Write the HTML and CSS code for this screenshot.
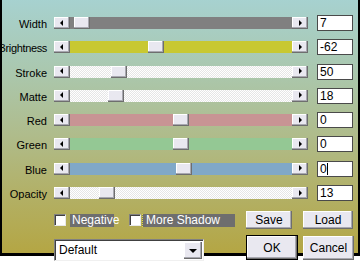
FILE: index.html
```html
<!DOCTYPE html>
<html>
<head>
<meta charset="utf-8">
<link rel="stylesheet" href="styles.css">
</head>
<body>
<div class="win">
  <div class="title">Parameters</div>
  <div class="rows">
    <div class="row">
      <span class="lbl">Width</span>
      <div class="slider"><span class="btn arr-l"></span><div class="track t-gray"><span class="thumb" style="left:4px"></span></div><span class="btn arr-r"></span></div>
      <span class="inp">7</span>
    </div>
    <div class="row">
      <span class="lbl lbl-tight">Brightness</span>
      <div class="slider"><span class="btn arr-l"></span><div class="track t-yellow"><span class="thumb" style="left:78px"></span></div><span class="btn arr-r"></span></div>
      <span class="inp">-62</span>
    </div>
    <div class="row">
      <span class="lbl">Stroke</span>
      <div class="slider"><span class="btn arr-l"></span><div class="track t-dither"><span class="thumb" style="left:41px"></span></div><span class="btn arr-r"></span></div>
      <span class="inp">50</span>
    </div>
    <div class="row">
      <span class="lbl">Matte</span>
      <div class="slider"><span class="btn arr-l"></span><div class="track t-dither"><span class="thumb" style="left:38px"></span></div><span class="btn arr-r"></span></div>
      <span class="inp">18</span>
    </div>
    <div class="row">
      <span class="lbl">Red</span>
      <div class="slider"><span class="btn arr-l"></span><div class="track t-red"><span class="thumb" style="left:103px"></span></div><span class="btn arr-r"></span></div>
      <span class="inp">0</span>
    </div>
    <div class="row">
      <span class="lbl">Green</span>
      <div class="slider"><span class="btn arr-l"></span><div class="track t-green"><span class="thumb" style="left:103px"></span></div><span class="btn arr-r"></span></div>
      <span class="inp">0</span>
    </div>
    <div class="row">
      <span class="lbl">Blue</span>
      <div class="slider"><span class="btn arr-l"></span><div class="track t-blue"><span class="thumb" style="left:106px"></span></div><span class="btn arr-r"></span></div>
      <span class="inp">0<span class="caret"></span></span>
    </div>
    <div class="row">
      <span class="lbl">Opacity</span>
      <div class="slider"><span class="btn arr-l"></span><div class="track t-dither"><span class="thumb" style="left:29px"></span></div><span class="btn arr-r"></span></div>
      <span class="inp">13</span>
    </div>
  </div>
  <div class="bottom">
    <div class="brow brow1">
      <div class="checks">
        <span class="cb"></span><span class="cblbl neg">Negative</span>
        <span class="cb cb2"></span><span class="cblbl more">More Shadow</span>
      </div>
      <span class="pbtn save">Save</span>
      <span class="pbtn load">Load</span>
    </div>
    <div class="brow brow2">
      <div class="combo"><span class="combotext">Default</span><span class="combobtn"></span></div>
      <span class="pbtn ok">OK</span>
      <span class="pbtn cancel">Cancel</span>
    </div>
  </div>
</div>
</body>
</html>
```

FILE: styles.css
```css
html, body {
  margin: 0;
  padding: 0;
}
body {
  width: 360px;
  height: 268px;
  overflow: hidden;
}
.win {
  box-sizing: border-box;
  width: 360px;
  height: 268px;
  border-left: 2px solid #000;
  border-right: 2px solid #000;
  border-bottom: 3px solid #000;
  background: linear-gradient(to bottom, #a6d3d5 0%, #aac8b0 30%, #afbc8c 55%, #b2b066 78%, #b4a644 100%);
  font-family: "Liberation Sans", Arial, sans-serif;
  font-size: 11px;
  color: #000;
}
.title {
  height: 15px;
  line-height: 15px;
  margin-top: -12px;
  padding-left: 14px;
  text-align: center;
  font-size: 11px;
  color: #111;
}
.rows {
  margin-top: 12px;
  display: flex;
  flex-direction: column;
  gap: 8.3px;
}
.row {
  display: grid;
  grid-template-columns: 45px 254px 36px;
  column-gap: 7px;
  height: 16px;
}
.row .inp { margin-left: 2px; }
.lbl {
  display: flex;
  justify-content: flex-end;
  white-space: nowrap;
  line-height: 16px;
  padding-top: 1px;
}
.lbl-tight {
  letter-spacing: -0.35px;
  margin-left: -10px;
}
.slider {
  display: flex;
  height: 12px;
  margin-top: 2px;
}
.btn, .thumb {
  box-sizing: border-box;
  width: 16px;
  height: 12px;
  background: #e9e8f0;
  box-shadow: inset -1px -1px #6e6e6e, inset -2px -2px #a8a8b0, inset 1px 1px #fff;
  flex: none;
}
.btn {
  position: relative;
  display: flex;
  align-items: center;
  justify-content: center;
}
.btn::before {
  content: "";
  width: 0;
  height: 0;
  border-top: 3px solid transparent;
  border-bottom: 3px solid transparent;
  margin-top: -1px;
}
.arr-l::before {
  border-right: 3px solid #000;
  margin-left: -2px;
}
.arr-r::before {
  border-left: 3px solid #000;
  margin-left: 0px;
}
.track {
  position: relative;
  flex: 1;
  height: 12px;
}
.thumb {
  position: absolute;
  top: 0;
}
.t-gray { background: #808080; }
.t-yellow { background: #c8c832; }
.t-red { background: #c89494; }
.t-green { background: #94c894; }
.t-blue { background: #80a8c8; }
.t-dither {
  background-color: #fff;
  background-image: repeating-conic-gradient(#e6e6e6 0 25%, #ffffff 0 50%);
  background-size: 2px 2px;
}
.inp {
  box-sizing: border-box;
  width: 36px;
  height: 16px;
  background: #fff;
  border: 1px solid #4a4a4a;
  padding-left: 2px;
  line-height: 14px;
  font-size: 12px;
  display: flex;
  align-items: center;
}
.caret {
  display: inline-block;
  width: 1px;
  height: 12px;
  background: #000;
}
.bottom {
  margin-top: 10px;
  display: flex;
  flex-direction: column;
  gap: 6px;
}
.brow {
  display: flex;
  align-items: flex-start;
  padding-left: 52px;
}
.checks {
  display: flex;
  align-items: center;
  width: 192px;
  height: 17px;
}
.cb {
  box-sizing: border-box;
  width: 12px;
  height: 12px;
  background: #fff;
  border-top: 1px solid #808080;
  border-left: 1px solid #808080;
  border-right: 1px solid #e8e8e8;
  border-bottom: 1px solid #e8e8e8;
  box-shadow: inset 1px 1px #404040;
  margin-top: 1px;
}
.cb2 { margin-left: 15px; }
.cblbl {
  height: 13px;
  line-height: 13px;
  background: #6e6e6e;
  color: #fff;
  font-size: 12px;
  margin-top: 1px;
  margin-left: 4px;
  padding: 0 2px 0 2px;
  box-sizing: border-box;
}
.neg { width: 44px; }
.more {
  width: 93px;
  margin-left: 1px;
  border-left: 1px dotted #e8e040;
  padding-left: 3px;
}
.pbtn {
  box-sizing: border-box;
  display: flex;
  align-items: center;
  justify-content: center;
  background: #e9e8f0;
  box-shadow: inset -1px -1px #6e6e6e, inset -2px -2px #a8a8b0, inset 1px 1px #fff;
  font-size: 12px;
  color: #000;
}
.save { width: 46px; height: 18px; }
.load { width: 50px; height: 18px; margin-left: 11px; }
.ok {
  width: 52px;
  height: 25px;
  border: 1px solid #000;
  margin-left: 42px;
}
.cancel { width: 51px; height: 24px; margin-left: 5px; margin-top: 1px; }
.combo {
  box-sizing: border-box;
  display: flex;
  align-items: center;
  justify-content: space-between;
  width: 150px;
  height: 22px;
  margin-top: 4px;
  background: #fff;
  border-top: 1px solid #808080;
  border-left: 1px solid #808080;
  border-right: 1px solid #f0f0f0;
  border-bottom: 1px solid #f0f0f0;
  box-shadow: inset 1px 1px #404040;
  padding: 1px 1px 1px 4px;
  font-size: 12px;
}
.combobtn {
  box-sizing: border-box;
  width: 18px;
  height: 17px;
  background: #e9e8f0;
  box-shadow: inset -1px -1px #6e6e6e, inset -2px -2px #a8a8b0, inset 1px 1px #fff;
  display: flex;
  align-items: center;
  justify-content: center;
}
.combobtn::before {
  content: "";
  border-left: 4px solid transparent;
  border-right: 4px solid transparent;
  border-top: 4px solid #000;
  margin-top: 1px;
}
```
